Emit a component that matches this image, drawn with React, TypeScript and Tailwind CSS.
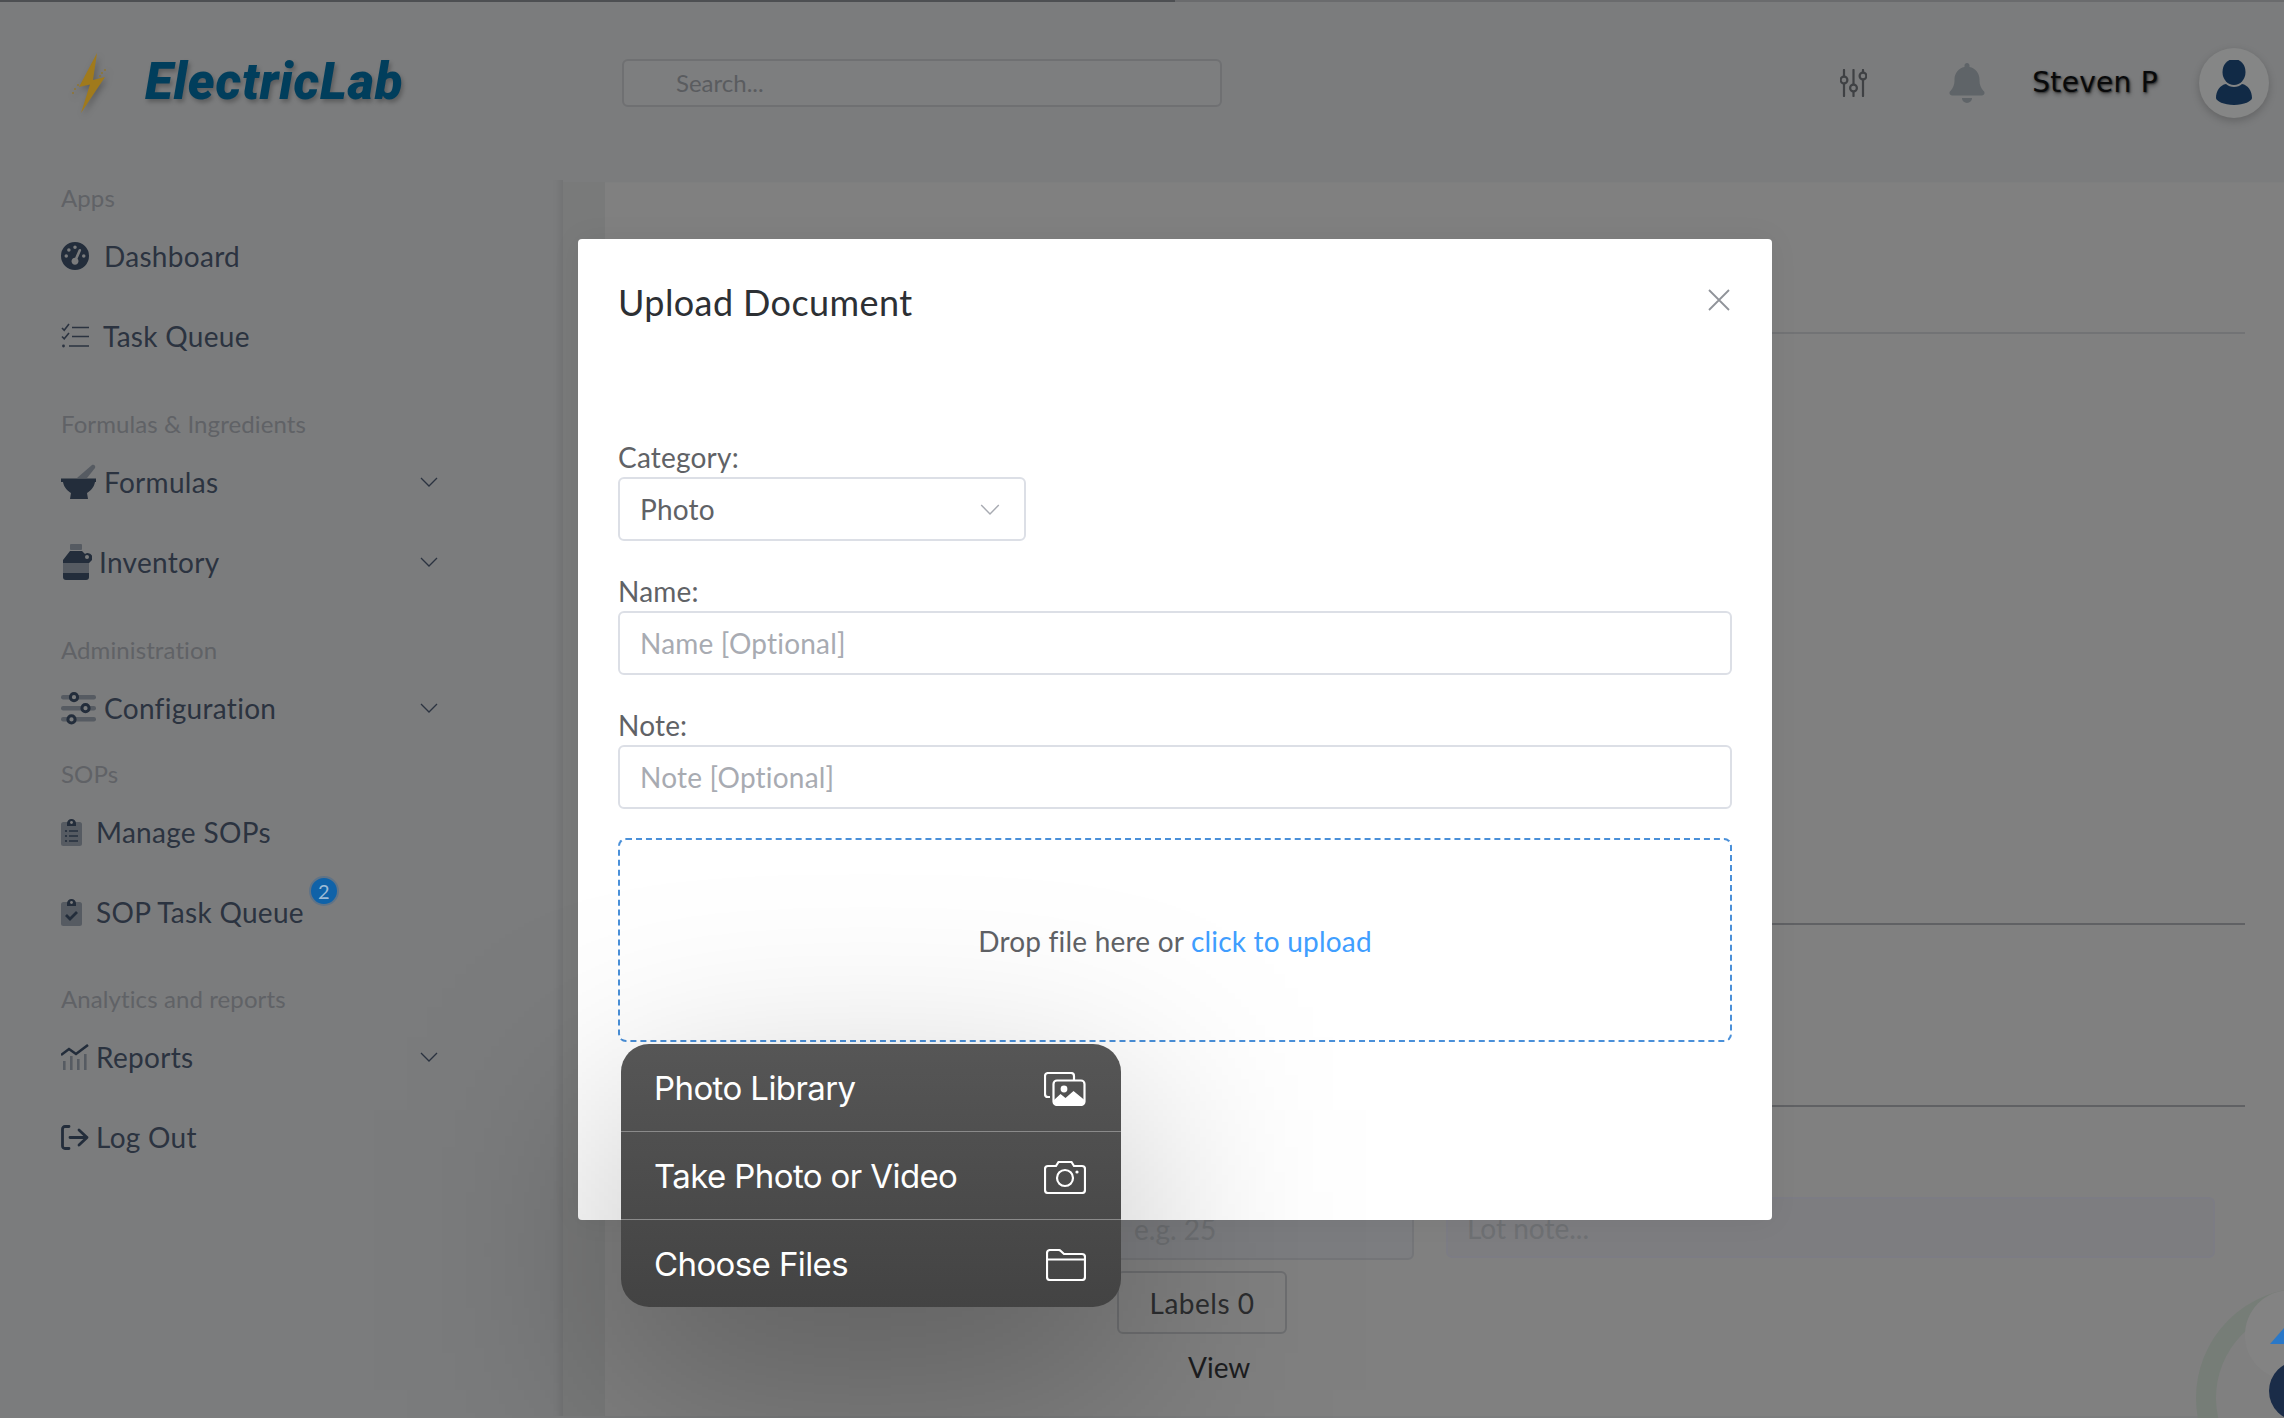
import React from "react";
import { FaBell, FaGaugeHigh } from "react-icons/fa6";

const Chevron = ({ className = "" }: { className?: string }) => (
  <svg viewBox="0 0 18 10" className={className} fill="none" stroke="currentColor" strokeWidth="1.3">
    <path d="M1 1l8 8 8-8" />
  </svg>
);

const TaskIcon = () => (
  <svg viewBox="0 0 28 26" className="w-[28px] h-[26px]" fill="none" stroke="#2b3340" strokeWidth="1.6">
    <path d="M1 5l2.2 2.2L8 1M1 13.5l2.2 2.2L8 10" />
    <circle cx="2.5" cy="23" r="1.4" fill="#2b3340" stroke="none" />
    <path d="M11 4.5h17M11 13.5h17M8 23h20" />
  </svg>
);
const MortarIcon = () => (
  <svg viewBox="0 0 35 36" className="w-[35px] h-[36px]">
    <path d="M16 14L31 1c2-1 4 1 3 3L26 14z" fill="#565b62" />
    <path d="M0 14.5h35v3.5h-1c-1 6-5 9-8 11l1 6H9l1-6c-3-2-7-5-8-11H0z" fill="#232d3b" />
  </svg>
);
const JugIcon = () => (
  <svg viewBox="0 0 29 36" className="w-[29px] h-[36px]">
    <rect x="7" y="0" width="12" height="6" rx="1" fill="#565b62" />
    <path d="M7 7h12l3 3a4.5 4.5 0 1 1 5.5 7.5A4 4 0 0 1 26 19v0H0v-3z" fill="#232d3b" />
    <circle cx="24" cy="13" r="2" fill="#7b7c7d" />
    <rect x="0" y="19" width="26" height="10" fill="#565b62" />
    <path d="M0 29h26v4a3 3 0 0 1-3 3H3a3 3 0 0 1-3-3z" fill="#232d3b" />
  </svg>
);
const SlidersIcon = () => (
  <svg viewBox="0 0 35 33" className="w-[35px] h-[33px]">
    <g fill="#565b62">
      <rect x="0" y="3" width="35" height="4.5" rx="2.2" />
      <rect x="0" y="14" width="35" height="4.5" rx="2.2" />
      <rect x="0" y="25" width="35" height="4.5" rx="2.2" />
    </g>
    <g fill="#7b7c7d" stroke="#232d3b" strokeWidth="3">
      <circle cx="13" cy="5.2" r="3.6" />
      <circle cx="24.5" cy="16.2" r="3.6" />
      <circle cx="10.5" cy="27.4" r="3.6" />
    </g>
  </svg>
);
const ClipList = () => (
  <svg viewBox="0 0 21 28" className="w-[21px] h-[28px]">
    <rect x="0" y="4" width="21" height="24" rx="2.5" fill="#565b62" />
    <path d="M6 5.5a4.5 4.5 0 0 1 9 0V8H6z" fill="#232d3b" />
    <circle cx="10.5" cy="4.5" r="1.4" fill="#7b7c7d" />
    <g fill="#232d3b">
      <circle cx="5" cy="13" r="1.1" /><circle cx="5" cy="18" r="1.1" /><circle cx="5" cy="23" r="1.1" />
      <rect x="8" y="12.3" width="9" height="1.4" /><rect x="8" y="17.3" width="9" height="1.4" /><rect x="8" y="22.3" width="9" height="1.4" />
    </g>
  </svg>
);
const ClipCheck = () => (
  <svg viewBox="0 0 21 28" className="w-[21px] h-[28px]">
    <rect x="0" y="4" width="21" height="24" rx="2.5" fill="#565b62" />
    <path d="M6 5.5a4.5 4.5 0 0 1 9 0V8H6z" fill="#232d3b" />
    <circle cx="10.5" cy="4.5" r="1.4" fill="#7b7c7d" />
    <path d="M5 17l4 4 7-7" fill="none" stroke="#232d3b" strokeWidth="2.8" />
  </svg>
);
const ChartIcon = () => (
  <svg viewBox="0 0 28 26" className="w-[28px] h-[26px]">
    <path d="M0 11l8-6 7 5L27 1" fill="none" stroke="#232d3b" strokeWidth="2.6" />
    <g fill="#565b62">
      <rect x="2" y="17" width="2.6" height="9" /><rect x="9" y="12" width="2.6" height="14" />
      <rect x="16" y="15" width="2.6" height="11" /><rect x="23" y="10" width="2.6" height="16" />
    </g>
  </svg>
);
const LogoutIcon = () => (
  <svg viewBox="0 0 28 25" className="w-[28px] h-[25px]" fill="none" stroke="#232d3b" strokeWidth="2.8" strokeLinecap="round" strokeLinejoin="round">
    <path d="M8 1.5H4A2.5 2.5 0 0 0 1.5 4v17A2.5 2.5 0 0 0 4 23.5h4" />
    <path d="M9 12.5h17M18 5l8 7.5-8 7.5" />
  </svg>
);

type Item = { label: string; icon: React.ReactNode; box: string; chevron?: boolean; badge?: boolean };
type Section = { title: string; cls: string; items: Item[] };

const sections: Section[] = [
  {
    title: "Apps",
    cls: "",
    items: [
      { label: "Dashboard", icon: <FaGaugeHigh className="w-[28px] h-[28px] text-[#232d3b]" />, box: "w-[43px]" },
      { label: "Task Queue", icon: <TaskIcon />, box: "w-[42px]" },
    ],
  },
  {
    title: "Formulas & Ingredients",
    cls: "mt-[30px]",
    items: [
      { label: "Formulas", icon: <MortarIcon />, box: "w-[43px]", chevron: true },
      { label: "Inventory", icon: <JugIcon />, box: "w-[38px] pl-[2px]", chevron: true },
    ],
  },
  {
    title: "Administration",
    cls: "mt-[30px]",
    items: [{ label: "Configuration", icon: <SlidersIcon />, box: "w-[43px]", chevron: true }],
  },
  {
    title: "SOPs",
    cls: "mt-[8px]",
    items: [
      { label: "Manage SOPs", icon: <ClipList />, box: "w-[35px]" },
      { label: "SOP Task Queue", icon: <ClipCheck />, box: "w-[35px]", badge: true },
    ],
  },
  {
    title: "Analytics and reports",
    cls: "mt-[29px]",
    items: [
      { label: "Reports", icon: <ChartIcon />, box: "w-[35px]", chevron: true },
      { label: "Log Out", icon: <LogoutIcon />, box: "w-[35px]" },
    ],
  },
];

const inputCls =
  "block w-full h-[64px] rounded-[6px] border-2 border-[#dcdfe6] bg-white px-[20px] text-[28px] tracking-[0.2px] text-[#606266] outline-none placeholder:text-[#a8abb2]";

const rows = [
  {
    label: "Photo Library",
    icon: (
      <svg viewBox="0 0 42 34" className="w-[42px] h-[34px]" fill="none" stroke="white" strokeWidth="2.2">
        <path d="M6 25H4a3 3 0 0 1-3-3V4a3 3 0 0 1 3-3h23a3 3 0 0 1 3 3v4" />
        <rect x="9.5" y="8.5" width="31" height="24.5" rx="3.5" />
        <circle cx="20" cy="17" r="3.4" fill="white" stroke="none" />
        <path d="M10 28l6.5-6 5 4 8-7 11 9v2a3 3 0 0 1-3 3H13a3 3 0 0 1-3-3z" fill="white" stroke="none" />
      </svg>
    ),
  },
  {
    label: "Take Photo or Video",
    icon: (
      <svg viewBox="0 0 42 34" className="w-[42px] h-[34px]" fill="none" stroke="white" strokeWidth="2.2">
        <path d="M4 6h8l2.5-4h13L30 6h8a3 3 0 0 1 3 3v21a3 3 0 0 1-3 3H4a3 3 0 0 1-3-3V9a3 3 0 0 1 3-3z" />
        <circle cx="21" cy="18" r="8" />
        <circle cx="33" cy="12" r="1.6" fill="white" stroke="none" />
      </svg>
    ),
  },
  {
    label: "Choose Files",
    icon: (
      <svg viewBox="0 0 40 32" className="w-[40px] h-[32px]" fill="none" stroke="white" strokeWidth="2.2">
        <path d="M1 10V4a3 3 0 0 1 3-3h8.5a3 3 0 0 1 2 .8L18 5h18a3 3 0 0 1 3 3v20a3 3 0 0 1-3 3H4a3 3 0 0 1-3-3z" />
        <path d="M1 10.5h38" />
      </svg>
    ),
  },
];

export default function App() {
  return (
    <div className="relative w-[2284px] h-[1418px] overflow-hidden bg-[#7b7c7d] font-['Lato','Liberation_Sans',sans-serif]">
      <div className="flex h-[2px]">
        <div className="w-[1175px] bg-[#4d4f52]" />
        <div className="flex-1 bg-[#6a6b6d]" />
      </div>

      <header className="flex items-center h-[180px] pb-[19px]">
        <div className="flex items-center w-[622px] pl-[72px]">
          <svg viewBox="0 0 36 60" className="w-[36px] h-[60px] drop-shadow-[2px_3px_3px_rgba(0,0,0,0.25)]">
            <path d="M25 0L7 34l11-2.5L9 60l24-36-12 3z" fill="#a07a1c" />
            <g fill="#8f7430">
              <circle cx="3" cy="36" r="1" /><circle cx="6" cy="32" r="1" /><circle cx="1" cy="40" r="1" />
              <circle cx="30" cy="20" r="1" /><circle cx="33" cy="17" r="1" /><circle cx="28" cy="23" r="1" />
            </g>
          </svg>
          <span className="ml-[37px] -mt-[2px] font-['Roboto',sans-serif] italic font-black text-[51px] leading-none tracking-[0.75px] text-[#013e5c] [text-shadow:2px_3px_4px_rgba(0,0,0,0.25)]">
            ElectricLab
          </span>
        </div>
        <input
          placeholder="Search..."
          className="w-[600px] h-[48px] rounded-[6px] border-2 border-[#6f7072] bg-[#7d7e7f] pl-[52px] text-[24px] outline-none placeholder:text-[#5a5c5f]"
        />
        <div className="ml-auto flex items-center pr-[15px]">
          <svg viewBox="0 0 27 28" className="w-[27px] h-[28px]" fill="none" stroke="#3f4144" strokeWidth="2.2" strokeLinecap="round">
            <path d="M4 1v6M4 15v12M13.5 1v14M13.5 23v4M23 1v2M23 11v16" />
            <circle cx="4" cy="11" r="3.4" />
            <circle cx="13.5" cy="19" r="3.4" />
            <circle cx="23" cy="7" r="3.4" />
          </svg>
          <FaBell className="ml-[82px] w-[36px] h-[40px] text-[#5f6468]" />
          <span className="ml-[47px] font-['DejaVu_Sans',sans-serif] text-[28px] font-medium tracking-[0.3px] text-[#08090a] [text-shadow:1px_1px_2px_rgba(0,0,0,0.6),1px_3px_4px_rgba(0,0,0,0.35)]">
            Steven P
          </span>
          <div className="ml-[41px] flex items-center justify-center w-[70px] h-[70px] rounded-full bg-[#858686] shadow-[0_3px_8px_rgba(0,0,0,0.2)]">
            <svg viewBox="0 0 36 46" className="w-[36px] h-[46px] mt-[1px]" fill="#112a46">
              <ellipse cx="18" cy="12" rx="11.5" ry="13" />
              <path d="M10 24c2 2 5 3 8 3s6-1 8-3c6 1 10 7 10 14 0 3-8 7-18 7S0 41 0 38c0-7 4-13 10-14z" />
            </svg>
          </div>
        </div>
      </header>

      <div className="flex">
        <aside className="w-[563px] h-[1236px] pl-[61px] -mt-[2px] shadow-[inset_-10px_0_8px_-8px_rgba(0,0,0,0.1)]">
          {sections.map((s) => (
            <div key={s.title} className={s.cls}>
              <div className="h-[36px] leading-[36px] text-[24px] tracking-[0.1px] text-[#606266]">{s.title}</div>
              {s.items.map((it) => (
                <div key={it.label} className="flex items-center h-[80px] w-[377px] text-[#2b3340]">
                  <span className={`${it.box} flex items-center shrink-0`}>{it.icon}</span>
                  <span className="relative text-[28px] tracking-[0.3px] leading-none">
                    {it.label}
                    {it.badge && (
                      <span className="absolute -top-[22px] -right-[35px] flex items-center justify-center w-[30px] h-[30px] rounded-full border-2 border-[#5f7387] bg-[#0f62a8] text-[20px] text-[#9dbbd6]">
                        2
                      </span>
                    )}
                  </span>
                  {it.chevron && <Chevron className="ml-auto w-[18px] h-[10px] text-[#2b3340]" />}
                </div>
              ))}
            </div>
          ))}
        </aside>
        <div className="w-[42px] bg-[#797a7a]" />
        <main className="flex-1 bg-[#808080] border-t border-[#7e7f7f] pr-[39px]">
          <div className="h-[151px] border-b-2 border-[#727375]" />
          <div className="h-[591px] border-b-2 border-[#606164]" />
          <div className="h-[182px] border-b-2 border-[#606164]" />
          <div className="flex mt-[90px] ml-[507px] pr-[30px] items-start">
            <input
              placeholder="e.g. 25"
              className="w-[302px] h-[63px] rounded-[6px] border-2 border-[#747578] bg-[#7c7d80] px-[20px] text-[28px] outline-none placeholder:text-[#6e7073]"
            />
            <input
              placeholder="Lot note..."
              className="ml-[32px] flex-1 h-[61px] rounded-[6px] border-2 border-[#7c7c84] bg-[#7d7d80] pl-[19px] text-[28px] outline-none placeholder:text-[#6e7073]"
            />
          </div>
          <button className="block ml-[512px] mt-[11px] w-[170px] h-[63px] rounded-[6px] border-2 border-[#6d6e70] bg-[#808080] text-[28px] tracking-[0.5px] text-[#2c2d2f]">
            Labels 0
          </button>
          <div className="ml-[583px] mt-[16px] text-[28px] leading-[34px] text-[#1c1d1f]">View</div>
        </main>
      </div>

      {/* floating widget in the corner */}
      <div className="absolute left-[2196px] top-[1288px] w-[220px] h-[220px] rounded-full border-[20px] border-[#767d77] bg-[#808080]" />
      <div className="absolute left-[2245px] top-[1290px] w-[90px] h-[90px] rounded-full bg-[#838383]" />
      <svg viewBox="0 0 14 16" className="absolute left-[2270px] top-[1328px] w-[14px] h-[16px]">
        <path d="M14 0v16H0z" fill="#2a78c8" />
      </svg>
      <div className="absolute left-[2269px] top-[1361px] w-[60px] h-[60px] rounded-full bg-[#1a2c48]" />

      {/* dialog */}
      <section className="absolute left-[578px] top-[239px] w-[1194px] h-[981px] rounded-[4px] bg-white px-[40px] pt-[41px] shadow-[0_0_30px_rgba(0,0,0,0.06)]">
        <div className="flex items-start justify-between">
          <h2 className="text-[36px] leading-[44px] tracking-[0.4px] text-[#2d3034]">Upload Document</h2>
          <svg viewBox="0 0 22 22" className="w-[22px] h-[22px] mt-[9px] mr-[2px]" fill="none" stroke="#909399" strokeWidth="1.8">
            <path d="M1 1l20 20M21 1L1 21" />
          </svg>
        </div>

        <div className="mt-[116px] h-[37px] leading-[34px] text-[28px] tracking-[0.2px] text-[#606266]">Category:</div>
        <div className="flex items-center justify-between w-[408px] h-[64px] rounded-[6px] border-2 border-[#dcdfe6] px-[20px] text-[28px] tracking-[0.2px] text-[#606266]">
          <span>Photo</span>
          <Chevron className="w-[20px] h-[11px] text-[#a8abb2] mr-[4px]" />
        </div>

        <div className="mt-[34px] h-[36px] leading-[32px] text-[28px] tracking-[0.2px] text-[#606266]">Name:</div>
        <input className={inputCls} placeholder="Name [Optional]" />

        <div className="mt-[34px] h-[36px] leading-[32px] text-[28px] tracking-[0.2px] text-[#606266]">Note:</div>
        <input className={inputCls} placeholder="Note [Optional]" />

        <div className="mt-[29px] flex items-center justify-center h-[204px] rounded-[8px] border-2 border-dashed border-[#4a90d9] text-[28px] tracking-[0.2px] text-[#606266]">
          <span className="mt-[2px]">
            Drop file here or <span className="text-[#409eff]">click to upload</span>
          </span>
        </div>
      </section>

      {/* soft shadow cast by the action menu */}
      <div className="absolute left-[610px] top-[1110px] w-[520px] h-[280px] pointer-events-none bg-black/25 blur-[110px]" />

      {/* action menu */}
      <div className="absolute left-[621px] top-[1044px] w-[500px] h-[263px] rounded-[28px] overflow-hidden flex flex-col bg-gradient-to-b from-[#565656] to-[#434343] font-['Inter',sans-serif] text-white">
        {rows.map((r, i) => (
          <div
            key={r.label}
            className={`flex-1 flex items-center justify-between pl-[33px] pr-[35px] pt-[3px] text-[33px] tracking-[-0.6px] ${
              i < 2 ? "border-b border-[#8a8a8a]" : ""
            }`}
          >
            <span>{r.label}</span>
            {r.icon}
          </div>
        ))}
      </div>
    </div>
  );
}
